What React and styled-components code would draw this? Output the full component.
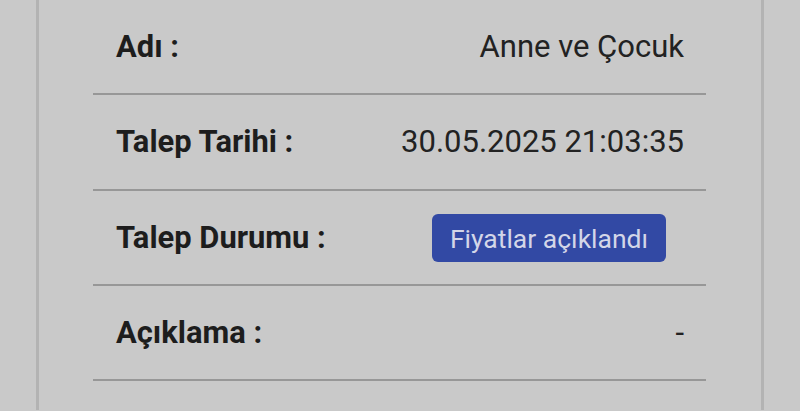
import React from "react";
import styled, { createGlobalStyle } from "styled-components";

const Global = createGlobalStyle`
  html, body { margin: 0; padding: 0; background: #c9c9c9; }
  body { font-family: Roboto, "Noto Sans", "Liberation Sans", sans-serif; overflow: hidden; }
`;

const Page = styled.div`
  height: 411px;
  background: #c9c9c9;
  padding: 0 36px;
  box-sizing: border-box;
  overflow: hidden;
`;

const Panel = styled.div`
  height: 100%;
  border-left: 3px solid #b3b3b3;
  border-right: 3px solid #b3b3b3;
  padding: 0 55px 0 54px;
  box-sizing: border-box;
`;

const Table = styled.div`
  border-top: 1px solid #bdbdbd;
  margin-top: -1px;
  display: flex;
  flex-direction: column;
`;

const Row = styled.div`
  height: 95.33px;
  box-sizing: border-box;
  border-bottom: 2px solid #979797;
  display: flex;
  justify-content: space-between;
  align-items: center;
  padding: 0 22px 0 23px;
`;

const Label = styled.div`
  font-weight: 700;
  font-size: 30.9px;
  color: #1d1d1d;
  white-space: nowrap;
`;

const Value = styled.div`
  font-size: 31px;
  color: #222;
  text-align: right;
  white-space: nowrap;
`;

const BadgeCell = styled.div`
  width: 270px;
  display: flex;
  justify-content: center;
  padding-top: 2px;
`;

const Badge = styled.span`
  display: inline-flex;
  align-items: center;
  justify-content: center;
  height: 48px;
  width: 234px;
  border-radius: 6px;
  background: #3249a4;
  color: #d3d6e8;
  font-size: 26.5px;
  white-space: nowrap;
  box-sizing: border-box;
`;

export default function App() {
  return (
    <>
      <Global />
      <Page>
        <Panel>
          <Table>
            <Row>
              <Label>Adı :</Label>
              <Value>Anne ve Çocuk</Value>
            </Row>
            <Row>
              <Label>Talep Tarihi :</Label>
              <Value>30.05.2025 21:03:35</Value>
            </Row>
            <Row>
              <Label>Talep Durumu :</Label>
              <BadgeCell>
                <Badge>Fiyatlar açıklandı</Badge>
              </BadgeCell>
            </Row>
            <Row>
              <Label>Açıklama :</Label>
              <Value>-</Value>
            </Row>
          </Table>
        </Panel>
      </Page>
    </>
  );
}
